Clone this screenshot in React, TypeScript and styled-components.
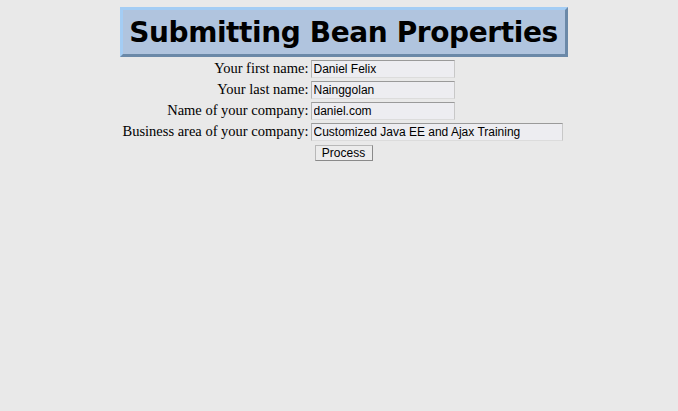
import React from "react";
import styled, { createGlobalStyle } from "styled-components";

const Global = createGlobalStyle`
  html, body { background: #e9e9e9; }
  body { margin: 7px 8px 8px 18px; font-family: "Liberation Serif", "Times New Roman", serif; font-size: 14.5px; color: #000; }
`;

const Page = styled.div`
  display: flex;
  flex-direction: column;
  align-items: center;
`;

const TitleBox = styled.div`
  background: #b0c4de;
  border-style: solid;
  border-width: 3px;
  border-color: #a4cdf4 #6b89a8 #6b89a8 #a4cdf4;
  padding: 5px 7px 3px 6px;
  font-family: "DejaVu Sans", Verdana, sans-serif;
  font-weight: bold;
  font-size: 28px;
  line-height: 36px;
  letter-spacing: -0.4px;
  color: #000;
  white-space: nowrap;
`;

const Form = styled.form`
  display: grid;
  grid-template-columns: auto auto;
  column-gap: 2px;
  margin: 1px 3px 0 0;
`;

const Label = styled.label`
  text-align: right;
  line-height: 21px;
  height: 21px;
  white-space: nowrap;
`;

const Field = styled.input<{ $w: number }>`
  width: ${(p) => p.$w}px;
  height: 18px;
  box-sizing: border-box;
  margin: 0;
  padding: 0 2px;
  background: #ededf1;
  border: 1px solid;
  border-color: #9a9a9a #c8c8c8 #dcdcdc #b4b4b4;
  font-family: "Liberation Sans", Tahoma, sans-serif;
  font-size: 12px;
  color: #000;
  justify-self: start;
  align-self: center;
  outline: none;
`;

const Spacer = styled.div``;

const Button = styled.button`
  justify-self: start;
  margin: 3px 0 0 4px;
  width: 58px;
  height: 16px;
  box-sizing: border-box;
  padding: 0;
  background: #ececec;
  border: 1px solid;
  border-color: #b8b8b8 #8a8a8a #8a8a8a #b8b8b8;
  font-family: "Liberation Sans", Tahoma, sans-serif;
  font-size: 12px;
  line-height: 14px;
  color: #000;
`;

export default function App() {
  return (
    <>
      <Global />
      <Page>
        <TitleBox>Submitting Bean Properties</TitleBox>
        <Form onSubmit={(e) => e.preventDefault()}>
          <Label>Your first name:</Label>
          <Field $w={144} defaultValue="Daniel Felix" />
          <Label>Your last name:</Label>
          <Field $w={144} defaultValue="Nainggolan" />
          <Label>Name of your company:</Label>
          <Field $w={144} defaultValue="daniel.com" />
          <Label>Business area of your company:</Label>
          <Field $w={252} defaultValue="Customized Java EE and Ajax Training" />
          <Spacer />
          <Button type="submit">Process</Button>
        </Form>
      </Page>
    </>
  );
}
